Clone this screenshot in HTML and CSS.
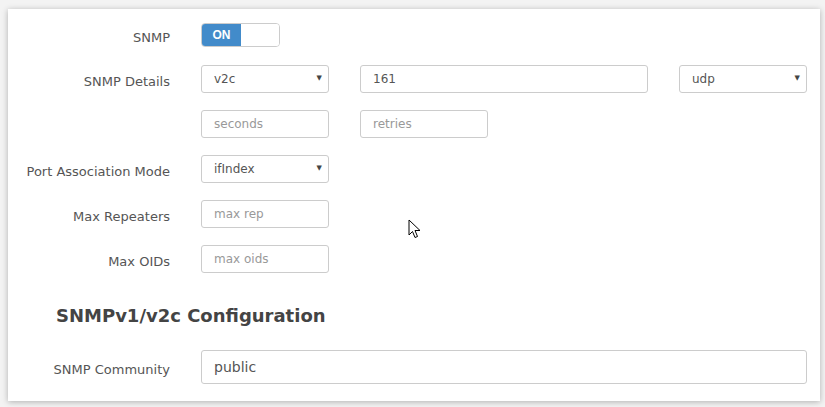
FILE: index.html
```html
<!DOCTYPE html>
<html lang="en">
<head>
  <meta charset="UTF-8">
  <title>SNMP Settings</title>
  <link rel="stylesheet" href="styles.css">
</head>
<body>
  <div class="card">
    <div class="row row-toggle">
      <label class="label">SNMP</label>
      <div class="toggle"><span class="toggle-on">ON</span><span class="toggle-off"></span></div>
    </div>

    <div class="row">
      <label class="label">SNMP Details</label>
      <div class="select"><select><option>v2c</option></select></div>
      <input class="input" type="text" value="161">
      <div class="select"><select><option>udp</option></select></div>
    </div>

    <div class="row">
      <span class="label"></span>
      <input class="input" type="text" placeholder="seconds">
      <input class="input input-sm" type="text" placeholder="retries">
    </div>

    <div class="row">
      <label class="label">Port Association Mode</label>
      <div class="select"><select><option>ifIndex</option></select></div>
    </div>

    <div class="row">
      <label class="label">Max Repeaters</label>
      <input class="input" type="text" placeholder="max rep">
    </div>

    <div class="row">
      <label class="label">Max OIDs</label>
      <input class="input" type="text" placeholder="max oids">
    </div>

    <h3 class="section-title">SNMPv1/v2c Configuration</h3>

    <div class="row row-wide">
      <label class="label">SNMP Community</label>
      <input class="input input-lg" type="text" value="public">
    </div>

    <svg class="cursor" width="13" height="20" viewBox="0 0 13 20">
      <path d="M1 1 L1 16 L4.5 12.5 L7 18.5 L9.5 17.5 L7 11.5 L12 11.5 Z" fill="#fff" stroke="#000" stroke-width="1" stroke-linejoin="miter"/>
    </svg>
  </div>
</body>
</html>
```

FILE: styles.css
```css
body {
  margin: 0;
  background: #f3f3f3;
  font-family: 'DejaVu Sans', Verdana, sans-serif;
  color: #555;
}

.card {
  position: relative;
  margin: 9px 5px 6px 8px;
  height: 392px;
  box-sizing: border-box;
  background: #fff;
  box-shadow: 0 1px 6px rgba(0, 0, 0, 0.28);
  padding-top: 14px;
}

.row {
  display: grid;
  grid-template-columns: 162px 128px 288px 128px;
  column-gap: 31px;
  align-items: center;
  margin-bottom: 17px;
}

.row-toggle {
  margin-bottom: 18px;
}

.row-wide {
  grid-template-columns: 162px 606px;
}

.label {
  font-size: 13px;
  color: #555;
  text-align: right;
  padding-top: 4px;
}

.toggle {
  display: flex;
  width: 79px;
  height: 24px;
  box-sizing: border-box;
  border: 1px solid #ccc;
  border-radius: 4px;
  overflow: hidden;
}

.toggle-on {
  width: 39px;
  background: #428bca;
  color: #fff;
  font-size: 12px;
  font-weight: bold;
  text-align: center;
  line-height: 22px;
  font-family: Arial, 'Liberation Sans', sans-serif;
}

.toggle-off {
  flex: 1;
  background: #fff;
}

.input,
.select select {
  width: 100%;
  height: 28px;
  box-sizing: border-box;
  border: 1px solid #ccc;
  border-radius: 3px;
  padding: 0 12px;
  font-family: 'DejaVu Sans', Verdana, sans-serif;
  font-size: 12px;
  color: #555;
  background: #fff;
  outline: none;
}

.input::placeholder {
  color: #999;
}

.input-sm {
  width: 128px;
}

.select {
  position: relative;
}

.select select {
  appearance: none;
  -webkit-appearance: none;
}

.select::after {
  content: "▼";
  position: absolute;
  right: 7px;
  top: 9px;
  font-size: 7px;
  color: #444;
  pointer-events: none;
}

.section-title {
  margin: 33px 0 24px 48px;
  font-size: 18px;
  line-height: 20px;
  font-weight: bold;
  color: #444;
}

.input-lg {
  height: 34px;
  font-size: 14px;
}

.cursor {
  position: absolute;
  left: 400px;
  top: 210px;
}
```
